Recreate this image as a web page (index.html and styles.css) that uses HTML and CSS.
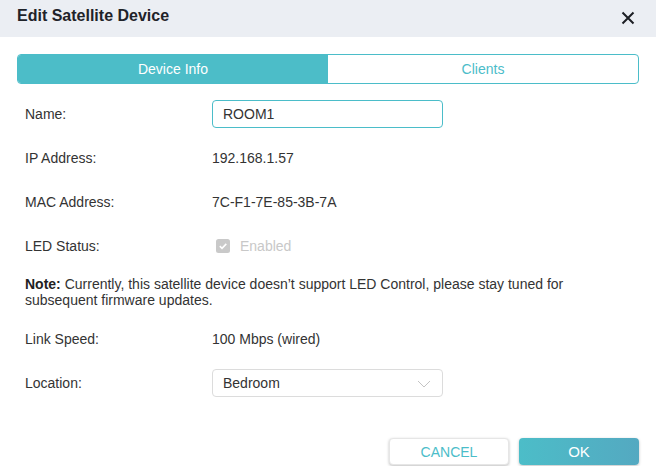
FILE: index.html
```html
<!DOCTYPE html>
<html>
<head>
<meta charset="utf-8">
<link rel="stylesheet" href="styles.css">
</head>
<body>
<div class="dialog">
  <div class="header">
    <span class="title">Edit Satellite Device</span>
    <span class="close"><svg width="14" height="14" viewBox="0 0 14 14"><path d="M1.5 1.5 L12.5 12.5 M12.5 1.5 L1.5 12.5" stroke="#1c1f24" stroke-width="2" fill="none"/></svg></span>
  </div>
  <div class="body">
    <div class="tabs">
      <div class="tab active">Device Info</div>
      <div class="tab">Clients</div>
    </div>
    <div class="form">
      <div class="row"><div class="label">Name:</div><div class="value"><div class="input">ROOM1</div></div></div>
      <div class="row"><div class="label">IP Address:</div><div class="value">192.168.1.57</div></div>
      <div class="row"><div class="label">MAC Address:</div><div class="value">7C-F1-7E-85-3B-7A</div></div>
      <div class="row"><div class="label">LED Status:</div><div class="value"><span class="check"><svg width="14" height="14" viewBox="0 0 14 14"><rect x="0" y="0" width="14" height="14" rx="2.5" fill="#c9c9c9"/><path d="M3.8 7.2 L6 9.3 L10.3 4.9" stroke="#fff" stroke-width="1.6" fill="none"/></svg></span><span class="disabled">Enabled</span></div></div>
      <div class="note"><b>Note:</b> Currently, this satellite device doesn’t support LED Control, please stay tuned for subsequent firmware updates.</div>
      <div class="row"><div class="label">Link Speed:</div><div class="value">100 Mbps (wired)</div></div>
      <div class="row loc"><div class="label">Location:</div><div class="value"><div class="select"><span>Bedroom</span><svg width="14" height="8" viewBox="0 0 14 8"><path d="M1 1 L7 7 L13 1" stroke="#c4c4c4" stroke-width="1" fill="none"/></svg></div></div></div>
    </div>
    <div class="buttons">
      <div class="btn cancel">CANCEL</div>
      <div class="btn ok">OK</div>
    </div>
  </div>
</div>
</body>
</html>
```
FILE: styles.css
```css
html, body {
  margin: 0;
  padding: 0;
  background: #fff;
}
body {
  font-family: "Liberation Sans", Arial, sans-serif;
  font-size: 14px;
  color: #333;
  width: 656px;
  height: 466px;
  overflow: hidden;
}
.header {
  height: 37px;
  background: #ebeef3;
  display: flex;
  align-items: center;
  justify-content: space-between;
  padding: 0 17px 0 17px;
  box-sizing: border-box;
}
.title {
  font-weight: bold;
  font-size: 16px;
  color: #1f2329;
  margin-top: -6px;
}
.close {
  display: flex;
  margin-right: 4px;
  margin-top: -2px;
}
.body {
  padding: 17px 17px 0 17px;
}
.tabs {
  display: flex;
  height: 30px;
  border: 1px solid #4bbdc9;
  border-radius: 4px;
  box-sizing: border-box;
  overflow: hidden;
}
.tab {
  flex: 1;
  display: flex;
  align-items: center;
  justify-content: center;
  color: #4bbdc9;
  font-size: 14px;
}
.tab.active {
  background: #4cbdc8;
  color: #fff;
}
.form {
  padding-top: 16px;
}
.row {
  display: flex;
  align-items: center;
  height: 28px;
  margin-bottom: 16px;
}
.label {
  width: 187px;
  padding-left: 8px;
}
.value {
  display: flex;
  align-items: center;
}
.input {
  width: 231px;
  height: 28px;
  box-sizing: border-box;
  border: 1px solid #4bbdc9;
  border-radius: 4px;
  padding-left: 10px;
  display: flex;
  align-items: center;
}
.check {
  display: flex;
  margin-left: 4px;
  margin-right: 10px;
}
.disabled {
  color: #c8c8c8;
}
.note {
  padding-left: 8px;
  line-height: 16px;
  margin-top: 1px;
  margin-bottom: 17px;
  color: #333;
}
.note b {
  color: #222;
}
.select {
  width: 231px;
  height: 28px;
  box-sizing: border-box;
  border: 1px solid #dcdcdc;
  border-radius: 4px;
  padding: 0 11px 0 10px;
  display: flex;
  align-items: center;
  justify-content: space-between;
}
.select svg {
  margin-top: 2px;
}
.row.loc {
  margin-bottom: 0;
}
.buttons {
  display: flex;
  justify-content: flex-end;
  gap: 10px;
  margin-top: 41px;
}
.btn {
  width: 120px;
  height: 27px;
  border-radius: 4px;
  display: flex;
  align-items: center;
  justify-content: center;
  font-size: 14px;
  box-sizing: border-box;
  box-shadow: 0 1px 3px rgba(0,0,0,0.25);
}
.cancel {
  background: #fff;
  color: #4bbdc9;
  border: 1px solid #e6e6e6;
}
.ok {
  background: linear-gradient(to right, #4cbdc8, #54a9c1);
  color: #fff;
  font-size: 15px;
}
```
